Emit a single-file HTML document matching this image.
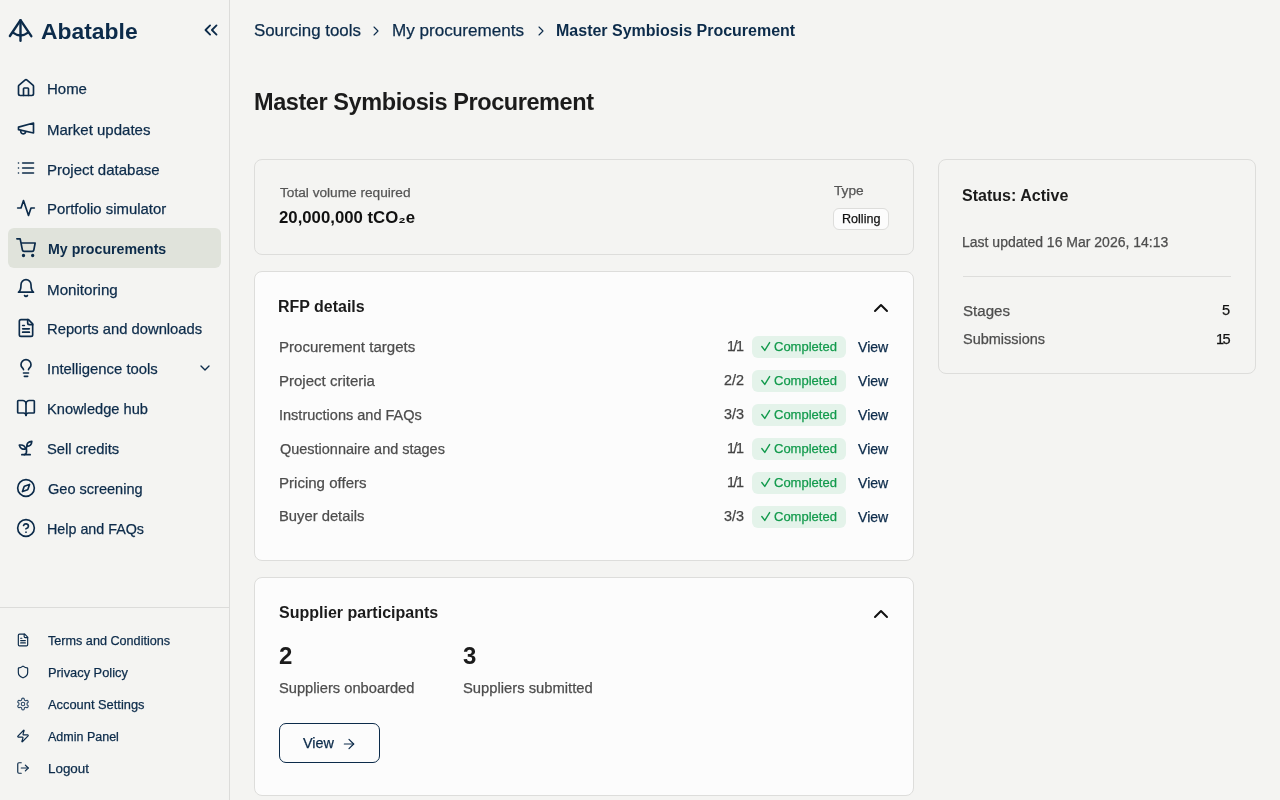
<!DOCTYPE html>
<html><head><meta charset="utf-8"><title>Master Symbiosis Procurement</title>
<style>
html,body{margin:0;padding:0;}
body{width:1280px;height:800px;overflow:hidden;position:relative;background:#f4f4f2;font-family:"Liberation Sans",sans-serif;}
.t{position:absolute;white-space:nowrap;will-change:transform;}
.r{-webkit-text-stroke-width:0.25px;}
.b{position:absolute;}
.i{position:absolute;overflow:visible;}
</style></head><body>
<div class="b" style="left:229px;top:0px;width:1px;height:800px;background:#dcdcda;"></div>
<div class="b" style="left:0px;top:607px;width:229px;height:1px;background:#dcdcda;"></div>
<div class="b" style="left:8px;top:228px;width:213px;height:40px;background:#e0e3db;border-radius:6px;"></div>
<svg class="i" style="left:0;top:0" width="40" height="50" viewBox="0 0 40 50" fill="none" stroke="#0c2b4a" stroke-width="2.4" stroke-linecap="round" stroke-linejoin="round"><path d="M9.9 36 L20.5 20.2 L31.3 36.2"/><path d="M20.5 20.2 V40.8"/><path d="M13 32.6 Q20.5 38.2 28 32.6"/></svg>
<div class="t" style="top:19.93px;font-size:22.886px;line-height:22.886px;color:#0c2b4a;font-weight:700;left:40.79px;">Abatable</div>
<svg class="i" style="left:200px;top:19px;" width="22" height="22" viewBox="0 0 24 24" fill="none" stroke="#0c2b4a" stroke-width="2" stroke-linecap="round" stroke-linejoin="round"><path d="m11 17-5-5 5-5"/><path d="m18 17-5-5 5-5"/></svg>
<svg class="i" style="left:16px;top:78px;" width="20" height="20" viewBox="0 0 24 24" fill="none" stroke="#0c2b4a" stroke-width="2" stroke-linecap="round" stroke-linejoin="round"><path d="M15 21v-8a1 1 0 0 0-1-1h-4a1 1 0 0 0-1 1v8"/><path d="M3 10a2 2 0 0 1 .709-1.528l7-5.999a2 2 0 0 1 2.582 0l7 5.999A2 2 0 0 1 21 10v9a2 2 0 0 1-2 2H5a2 2 0 0 1-2-2z"/></svg>
<div class="t r" style="top:81.93px;font-size:14.971px;line-height:14.971px;color:#0c2b4a;left:47.37px;">Home</div>
<svg class="i" style="left:16px;top:118px;" width="20" height="20" viewBox="0 0 24 24" fill="none" stroke="#0c2b4a" stroke-width="2" stroke-linecap="round" stroke-linejoin="round"><path d="m3 11 18-5v12L3 14v-3z"/><path d="M11.6 16.8a3 3 0 1 1-5.8-1.6"/></svg>
<div class="t r" style="top:121.90px;font-size:15.008px;line-height:15.008px;color:#0c2b4a;left:47.38px;">Market updates</div>
<svg class="i" style="left:16px;top:158px;" width="20" height="20" viewBox="0 0 24 24" fill="none" stroke="#0c2b4a" stroke-width="2" stroke-linecap="round" stroke-linejoin="round"><path d="M3 12h.01"/><path d="M3 18h.01"/><path d="M3 6h.01"/><path d="M8 12h13"/><path d="M8 18h13"/><path d="M8 6h13"/></svg>
<div class="t r" style="top:161.90px;font-size:15.002px;line-height:15.002px;color:#0c2b4a;left:47.39px;">Project database</div>
<svg class="i" style="left:16px;top:198px;" width="20" height="20" viewBox="0 0 24 24" fill="none" stroke="#0c2b4a" stroke-width="2" stroke-linecap="round" stroke-linejoin="round"><path d="M22 12h-4l-3 9L9 3l-3 9H2"/></svg>
<div class="t r" style="top:201.99px;font-size:14.902px;line-height:14.902px;color:#0c2b4a;left:47.39px;">Portfolio simulator</div>
<svg class="i" style="left:16px;top:238px;" width="20" height="20" viewBox="0 0 24 24" fill="none" stroke="#0c2b4a" stroke-width="2" stroke-linecap="round" stroke-linejoin="round"><circle cx="9" cy="21" r="1"/><circle cx="20" cy="21" r="1"/><path d="M1 1h4l2.68 13.39a2 2 0 0 0 2 1.61h9.72a2 2 0 0 0 2-1.61L23 6H6"/></svg>
<div class="t" style="top:242.07px;font-size:14.207px;line-height:14.207px;color:#0c2b4a;font-weight:700;left:47.78px;">My procurements</div>
<svg class="i" style="left:16px;top:278px;" width="20" height="20" viewBox="0 0 24 24" fill="none" stroke="#0c2b4a" stroke-width="2" stroke-linecap="round" stroke-linejoin="round"><path d="M6 8a6 6 0 0 1 12 0c0 7 3 9 3 9H3s3-2 3-9"/><path d="M10.3 21a1.94 1.94 0 0 0 3.4 0"/></svg>
<div class="t r" style="top:281.75px;font-size:15.177px;line-height:15.177px;color:#0c2b4a;left:47.38px;">Monitoring</div>
<svg class="i" style="left:16px;top:318px;" width="20" height="20" viewBox="0 0 24 24" fill="none" stroke="#0c2b4a" stroke-width="2" stroke-linecap="round" stroke-linejoin="round"><path d="M15 2H6a2 2 0 0 0-2 2v16a2 2 0 0 0 2 2h12a2 2 0 0 0 2-2V7Z"/><path d="M14 2v4a2 2 0 0 0 2 2h4"/><path d="M10 9H8"/><path d="M16 13H8"/><path d="M16 17H8"/></svg>
<div class="t r" style="top:322.09px;font-size:14.782px;line-height:14.782px;color:#0c2b4a;left:47.39px;">Reports and downloads</div>
<svg class="i" style="left:16px;top:358px;" width="20" height="20" viewBox="0 0 24 24" fill="none" stroke="#0c2b4a" stroke-width="2" stroke-linecap="round" stroke-linejoin="round"><path d="M15 14c.2-1 .7-1.7 1.5-2.5 1-.9 1.5-2.2 1.5-3.5A6 6 0 0 0 6 8c0 1 .2 2.2 1.5 3.5.7.7 1.3 1.5 1.5 2.5"/><path d="M9 18h6"/><path d="M10 22h4"/></svg>
<div class="t r" style="top:362.00px;font-size:14.881px;line-height:14.881px;color:#0c2b4a;left:47.39px;">Intelligence tools</div>
<svg class="i" style="left:16px;top:398px;" width="20" height="20" viewBox="0 0 24 24" fill="none" stroke="#0c2b4a" stroke-width="2" stroke-linecap="round" stroke-linejoin="round"><path d="M12 7v14"/><path d="M3 18a1 1 0 0 1-1-1V4a1 1 0 0 1 1-1h5a4 4 0 0 1 4 4 4 4 0 0 1 4-4h5a1 1 0 0 1 1 1v13a1 1 0 0 1-1 1h-6a3 3 0 0 0-3 3 3 3 0 0 0-3-3z"/></svg>
<div class="t r" style="top:402.20px;font-size:14.654px;line-height:14.654px;color:#0c2b4a;left:47.41px;">Knowledge hub</div>
<svg class="i" style="left:16px;top:438px;" width="20" height="20" viewBox="0 0 24 24" fill="none" stroke="#0c2b4a" stroke-width="2" stroke-linecap="round" stroke-linejoin="round"><path d="M7 20h10"/><path d="M10 20c5.5-2.5.8-6.4 3-10"/><path d="M9.5 9.4c1.1.8 1.8 2.2 2.3 3.7-2 .4-3.5.4-4.8-.3-1.2-.6-2.3-1.9-3-4.2 2.8-.5 4.4 0 5.5.8z"/><path d="M14.1 6a7 7 0 0 0-1.1 4c1.9-.1 3.3-.6 4.3-1.4 1-1 1.6-2.3 1.7-4.6-2.7.1-4 1-4.9 2z"/></svg>
<div class="t r" style="top:442.11px;font-size:14.758px;line-height:14.758px;color:#0c2b4a;left:47.40px;">Sell credits</div>
<svg class="i" style="left:16px;top:478px;" width="20" height="20" viewBox="0 0 24 24" fill="none" stroke="#0c2b4a" stroke-width="2" stroke-linecap="round" stroke-linejoin="round"><circle cx="12" cy="12" r="10"/><path d="m16.24 7.76-1.804 5.411a2 2 0 0 1-1.265 1.265L7.76 16.24l1.804-5.411a2 2 0 0 1 1.265-1.265z"/></svg>
<div class="t r" style="top:482.28px;font-size:14.554px;line-height:14.554px;color:#0c2b4a;left:48.40px;">Geo screening</div>
<svg class="i" style="left:16px;top:518px;" width="20" height="20" viewBox="0 0 24 24" fill="none" stroke="#0c2b4a" stroke-width="2" stroke-linecap="round" stroke-linejoin="round"><circle cx="12" cy="12" r="10"/><path d="M9.09 9a3 3 0 0 1 5.83 1c0 2-3 3-3 3"/><path d="M12 17h.01"/></svg>
<div class="t r" style="top:522.49px;font-size:14.307px;line-height:14.307px;color:#0c2b4a;left:47.43px;">Help and FAQs</div>
<svg class="i" style="left:197px;top:360px;" width="16" height="16" viewBox="0 0 24 24" fill="none" stroke="#0c2b4a" stroke-width="2" stroke-linecap="round" stroke-linejoin="round"><path d="m6 9 6 6 6-6"/></svg>
<svg class="i" style="left:16px;top:633px;" width="14" height="14" viewBox="0 0 24 24" fill="none" stroke="#0c2b4a" stroke-width="2" stroke-linecap="round" stroke-linejoin="round"><path d="M15 2H6a2 2 0 0 0-2 2v16a2 2 0 0 0 2 2h12a2 2 0 0 0 2-2V7Z"/><path d="M14 2v4a2 2 0 0 0 2 2h4"/><path d="M10 9H8"/><path d="M16 13H8"/><path d="M16 17H8"/></svg>
<div class="t r" style="top:635.11px;font-size:12.632px;line-height:12.632px;color:#0c2b4a;left:47.80px;">Terms and Conditions</div>
<svg class="i" style="left:16px;top:665px;" width="14" height="14" viewBox="0 0 24 24" fill="none" stroke="#0c2b4a" stroke-width="2" stroke-linecap="round" stroke-linejoin="round"><path d="M20 13c0 5-3.5 7.5-7.66 8.95a1 1 0 0 1-.67-.01C7.5 20.5 4 18 4 13V6a1 1 0 0 1 1-1c2 0 4.5-1.2 6.24-2.72a1.17 1.17 0 0 1 1.52 0C14.51 3.81 17 5 19 5a1 1 0 0 1 1 1z"/></svg>
<div class="t r" style="top:666.94px;font-size:12.832px;line-height:12.832px;color:#0c2b4a;left:47.77px;">Privacy Policy</div>
<svg class="i" style="left:16px;top:697px;" width="14" height="14" viewBox="0 0 24 24" fill="none" stroke="#2f4b68" stroke-width="1.9" stroke-linecap="round" stroke-linejoin="round"><path d="M12.22 2h-.44a2 2 0 0 0-2 2v.18a2 2 0 0 1-1 1.73l-.43.25a2 2 0 0 1-2 0l-.15-.08a2 2 0 0 0-2.73.73l-.22.38a2 2 0 0 0 .73 2.73l.15.1a2 2 0 0 1 1 1.72v.51a2 2 0 0 1-1 1.74l-.15.09a2 2 0 0 0-.73 2.73l.22.38a2 2 0 0 0 2.73.73l.15-.08a2 2 0 0 1 2 0l.43.25a2 2 0 0 1 1 1.73V20a2 2 0 0 0 2 2h.44a2 2 0 0 0 2-2v-.18a2 2 0 0 1 1-1.73l.43-.25a2 2 0 0 1 2 0l.15.08a2 2 0 0 0 2.73-.73l.22-.39a2 2 0 0 0-.73-2.73l-.15-.08a2 2 0 0 1-1-1.74v-.5a2 2 0 0 1 1-1.74l.15-.09a2 2 0 0 0 .73-2.73l-.22-.38a2 2 0 0 0-2.73-.73l-.15.08a2 2 0 0 1-2 0l-.43-.25a2 2 0 0 1-1-1.73V4a2 2 0 0 0-2-2z"/><circle cx="12" cy="12" r="3"/></svg>
<div class="t r" style="top:698.91px;font-size:12.861px;line-height:12.861px;color:#0c2b4a;left:47.80px;">Account Settings</div>
<svg class="i" style="left:16px;top:729px;" width="14" height="14" viewBox="0 0 24 24" fill="none" stroke="#0c2b4a" stroke-width="2" stroke-linecap="round" stroke-linejoin="round"><path d="M4 14a1 1 0 0 1-.78-1.63l9.9-10.2a.5.5 0 0 1 .86.46l-1.92 6.02A1 1 0 0 0 13 10h7a1 1 0 0 1 .78 1.63l-9.9 10.2a.5.5 0 0 1-.86-.46l1.92-6.02A1 1 0 0 0 11 14z"/></svg>
<div class="t r" style="top:731.22px;font-size:12.502px;line-height:12.502px;color:#0c2b4a;left:47.80px;">Admin Panel</div>
<svg class="i" style="left:16px;top:761px;" width="14" height="14" viewBox="0 0 24 24" fill="none" stroke="#0c2b4a" stroke-width="2" stroke-linecap="round" stroke-linejoin="round"><path d="M9 21H5a2 2 0 0 1-2-2V5a2 2 0 0 1 2-2h4"/><polyline points="16 17 21 12 16 7"/><line x1="21" x2="9" y1="12" y2="12"/></svg>
<div class="t r" style="top:762.46px;font-size:13.4px;line-height:13.4px;color:#0c2b4a;left:47.74px;">Logout</div>
<div class="t r" style="top:22.62px;font-size:16.866px;line-height:16.866px;color:#0c2b4a;left:253.78px;">Sourcing tools</div>
<svg class="i" style="left:368px;top:23px;" width="16" height="16" viewBox="0 0 24 24" fill="none" stroke="#0c2b4a" stroke-width="1.6" stroke-linecap="round" stroke-linejoin="round"><path d="m9 18 6-6-6-6"/></svg>
<div class="t r" style="top:22.44px;font-size:17.088px;line-height:17.088px;color:#0c2b4a;left:392.09px;">My procurements</div>
<svg class="i" style="left:533px;top:23px;" width="16" height="16" viewBox="0 0 24 24" fill="none" stroke="#0c2b4a" stroke-width="1.6" stroke-linecap="round" stroke-linejoin="round"><path d="m9 18 6-6-6-6"/></svg>
<div class="t" style="top:23.35px;font-size:16.008px;line-height:16.008px;color:#0c2b4a;font-weight:700;left:556.09px;">Master Symbiosis Procurement</div>
<div class="t" style="top:91.00px;font-size:23.504px;line-height:23.504px;color:#1b1b1b;font-weight:700;letter-spacing:-0.42px;left:253.60px;">Master Symbiosis Procurement</div>
<div class="b" style="left:254px;top:159px;width:660px;height:96px;box-sizing:border-box;border:1px solid #dddddb;border-radius:8px;background:#f4f4f2;"></div>
<div class="t r" style="top:186.12px;font-size:13.679px;line-height:13.679px;color:#555555;left:280.00px;">Total volume required</div>
<div class="t" style="top:210.41px;font-size:16.769px;line-height:16.769px;color:#111111;font-weight:700;left:279.30px;">20,000,000 tCO₂e</div>
<div class="t r" style="top:184.10px;font-size:13.709px;line-height:13.709px;color:#555555;left:834.00px;">Type</div>
<div class="b" style="left:833px;top:208px;width:56px;height:22px;box-sizing:border-box;border:1px solid #dddddb;border-radius:6px;background:#fcfcfc;"></div>
<div class="t r" style="top:213.16px;font-size:12.572px;line-height:12.572px;color:#111111;left:842.39px;">Rolling</div>
<div class="b" style="left:254px;top:271px;width:660px;height:290px;box-sizing:border-box;border:1px solid #dddddb;border-radius:8px;background:#fcfcfc;"></div>
<div class="t" style="top:299.38px;font-size:15.97px;line-height:15.97px;color:#1b1b1b;font-weight:700;left:278.19px;">RFP details</div>
<svg class="i" style="left:869px;top:296px;" width="24" height="24" viewBox="0 0 24 24" fill="none" stroke="#111111" stroke-width="2" stroke-linecap="round" stroke-linejoin="round"><path d="m18 15-6-6-6 6"/></svg>
<div class="t r" style="top:339.16px;font-size:15.045px;line-height:15.045px;color:#4d4d4d;left:278.80px;">Procurement targets</div>
<div class="t r" style="top:339.31px;font-size:14.4px;line-height:14.4px;color:#444444;letter-spacing:-1.5px;right:537.70px;text-align:right;">1/1</div>
<div class="b" style="left:752px;top:336px;width:94px;height:22px;background:#e4f3ea;border-radius:6px;"></div>
<svg class="i" style="left:758px;top:336px" width="16" height="22" viewBox="0 0 16 22" fill="none" stroke="#129a4c" stroke-width="1.4" stroke-linecap="round" stroke-linejoin="round"><path d="M3.8 10.5 L6.8 14.4 L11.6 6.6"/></svg>
<div class="t r" style="top:340.10px;font-size:13.0px;line-height:13.0px;color:#129a4c;left:773.60px;">Completed</div>
<div class="t r" style="top:339.96px;font-size:14.1px;line-height:14.1px;color:#0c2b4a;left:858.20px;">View</div>
<div class="t r" style="top:373.17px;font-size:15.037px;line-height:15.037px;color:#4d4d4d;left:278.80px;">Project criteria</div>
<div class="t r" style="top:373.31px;font-size:14.4px;line-height:14.4px;color:#444444;right:536.20px;text-align:right;">2/2</div>
<div class="b" style="left:752px;top:370px;width:94px;height:22px;background:#e4f3ea;border-radius:6px;"></div>
<svg class="i" style="left:758px;top:370px" width="16" height="22" viewBox="0 0 16 22" fill="none" stroke="#129a4c" stroke-width="1.4" stroke-linecap="round" stroke-linejoin="round"><path d="M3.8 10.5 L6.8 14.4 L11.6 6.6"/></svg>
<div class="t r" style="top:374.10px;font-size:13.0px;line-height:13.0px;color:#129a4c;left:773.60px;">Completed</div>
<div class="t r" style="top:373.96px;font-size:14.1px;line-height:14.1px;color:#0c2b4a;left:858.20px;">View</div>
<div class="t r" style="top:407.60px;font-size:14.535px;line-height:14.535px;color:#4d4d4d;left:278.83px;">Instructions and FAQs</div>
<div class="t r" style="top:407.31px;font-size:14.4px;line-height:14.4px;color:#444444;right:536.20px;text-align:right;">3/3</div>
<div class="b" style="left:752px;top:404px;width:94px;height:22px;background:#e4f3ea;border-radius:6px;"></div>
<svg class="i" style="left:758px;top:404px" width="16" height="22" viewBox="0 0 16 22" fill="none" stroke="#129a4c" stroke-width="1.4" stroke-linecap="round" stroke-linejoin="round"><path d="M3.8 10.5 L6.8 14.4 L11.6 6.6"/></svg>
<div class="t r" style="top:408.10px;font-size:13.0px;line-height:13.0px;color:#129a4c;left:773.60px;">Completed</div>
<div class="t r" style="top:407.96px;font-size:14.1px;line-height:14.1px;color:#0c2b4a;left:858.20px;">View</div>
<div class="t r" style="top:441.64px;font-size:14.484px;line-height:14.484px;color:#4d4d4d;left:279.83px;">Questionnaire and stages</div>
<div class="t r" style="top:441.31px;font-size:14.4px;line-height:14.4px;color:#444444;letter-spacing:-1.5px;right:537.70px;text-align:right;">1/1</div>
<div class="b" style="left:752px;top:438px;width:94px;height:22px;background:#e4f3ea;border-radius:6px;"></div>
<svg class="i" style="left:758px;top:438px" width="16" height="22" viewBox="0 0 16 22" fill="none" stroke="#129a4c" stroke-width="1.4" stroke-linecap="round" stroke-linejoin="round"><path d="M3.8 10.5 L6.8 14.4 L11.6 6.6"/></svg>
<div class="t r" style="top:442.10px;font-size:13.0px;line-height:13.0px;color:#129a4c;left:773.60px;">Completed</div>
<div class="t r" style="top:441.96px;font-size:14.1px;line-height:14.1px;color:#0c2b4a;left:858.20px;">View</div>
<div class="t r" style="top:475.15px;font-size:15.067px;line-height:15.067px;color:#4d4d4d;left:278.80px;">Pricing offers</div>
<div class="t r" style="top:475.31px;font-size:14.4px;line-height:14.4px;color:#444444;letter-spacing:-1.5px;right:537.70px;text-align:right;">1/1</div>
<div class="b" style="left:752px;top:472px;width:94px;height:22px;background:#e4f3ea;border-radius:6px;"></div>
<svg class="i" style="left:758px;top:472px" width="16" height="22" viewBox="0 0 16 22" fill="none" stroke="#129a4c" stroke-width="1.4" stroke-linecap="round" stroke-linejoin="round"><path d="M3.8 10.5 L6.8 14.4 L11.6 6.6"/></svg>
<div class="t r" style="top:476.10px;font-size:13.0px;line-height:13.0px;color:#129a4c;left:773.60px;">Completed</div>
<div class="t r" style="top:475.96px;font-size:14.1px;line-height:14.1px;color:#0c2b4a;left:858.20px;">View</div>
<div class="t r" style="top:509.38px;font-size:14.787px;line-height:14.787px;color:#4d4d4d;left:278.80px;">Buyer details</div>
<div class="t r" style="top:509.31px;font-size:14.4px;line-height:14.4px;color:#444444;right:536.20px;text-align:right;">3/3</div>
<div class="b" style="left:752px;top:506px;width:94px;height:22px;background:#e4f3ea;border-radius:6px;"></div>
<svg class="i" style="left:758px;top:506px" width="16" height="22" viewBox="0 0 16 22" fill="none" stroke="#129a4c" stroke-width="1.4" stroke-linecap="round" stroke-linejoin="round"><path d="M3.8 10.5 L6.8 14.4 L11.6 6.6"/></svg>
<div class="t r" style="top:510.10px;font-size:13.0px;line-height:13.0px;color:#129a4c;left:773.60px;">Completed</div>
<div class="t r" style="top:509.96px;font-size:14.1px;line-height:14.1px;color:#0c2b4a;left:858.20px;">View</div>
<div class="b" style="left:254px;top:577px;width:660px;height:219px;box-sizing:border-box;border:1px solid #dddddb;border-radius:8px;background:#fcfcfc;"></div>
<div class="t" style="top:605.35px;font-size:16.002px;line-height:16.002px;color:#1b1b1b;font-weight:700;left:278.59px;">Supplier participants</div>
<svg class="i" style="left:869px;top:602px;" width="24" height="24" viewBox="0 0 24 24" fill="none" stroke="#111111" stroke-width="2" stroke-linecap="round" stroke-linejoin="round"><path d="m18 15-6-6-6 6"/></svg>
<div class="t" style="top:644.48px;font-size:24px;line-height:24px;color:#1b1b1b;font-weight:700;left:279.30px;">2</div>
<div class="t" style="top:644.48px;font-size:24px;line-height:24px;color:#1b1b1b;font-weight:700;left:463.00px;">3</div>
<div class="t r" style="top:680.87px;font-size:14.688px;line-height:14.688px;color:#4d4d4d;left:278.59px;">Suppliers onboarded</div>
<div class="t r" style="top:680.80px;font-size:14.772px;line-height:14.772px;color:#4d4d4d;left:462.79px;">Suppliers submitted</div>
<div class="b" style="left:279px;top:723px;width:101px;height:40px;box-sizing:border-box;border:1px solid #0c2b4a;border-radius:7px;background:#fcfcfc;"></div>
<div class="t r" style="top:735.80px;font-size:14.414px;line-height:14.414px;color:#0c2b4a;left:303.10px;">View</div>
<svg class="i" style="left:341px;top:736px;" width="16" height="16" viewBox="0 0 24 24" fill="none" stroke="#0c2b4a" stroke-width="1.8" stroke-linecap="round" stroke-linejoin="round"><path d="M5 12h14"/><path d="m12 5 7 7-7 7"/></svg>
<div class="b" style="left:938px;top:159px;width:318px;height:215px;box-sizing:border-box;border:1px solid #dddddb;border-radius:8px;background:#f4f4f2;"></div>
<div class="t" style="top:187.32px;font-size:16.044px;line-height:16.044px;color:#1b1b1b;font-weight:700;left:962.20px;">Status: Active</div>
<div class="t r" style="top:235.14px;font-size:14.014px;line-height:14.014px;color:#4d4d4d;left:962.19px;">Last updated 16 Mar 2026, 14:13</div>
<div class="b" style="left:963px;top:276px;width:268px;height:1px;background:#dddddb;"></div>
<div class="t r" style="top:302.82px;font-size:15.098px;line-height:15.098px;color:#4d4d4d;left:962.78px;">Stages</div>
<div class="t r" style="top:303.24px;font-size:14.6px;line-height:14.6px;color:#111111;right:49.50px;text-align:right;">5</div>
<div class="t r" style="top:331.73px;font-size:14.494px;line-height:14.494px;color:#4d4d4d;left:962.80px;">Submissions</div>
<div class="t r" style="top:331.64px;font-size:14.6px;line-height:14.6px;color:#111111;letter-spacing:-1.5px;right:51.00px;text-align:right;">15</div>
</body></html>
